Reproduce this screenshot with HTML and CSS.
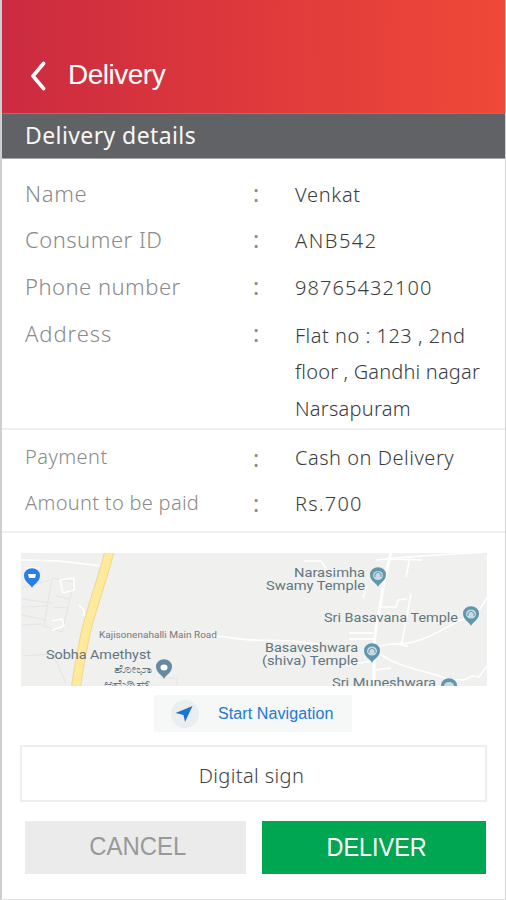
FILE: index.html
```html
<!DOCTYPE html>
<html lang="en">
<head>
<meta charset="utf-8">
<title>Delivery</title>
<link rel="stylesheet" href="styles.css">
</head>
<body>
<div class="screen">
  <header class="topbar">
    <svg class="back" width="18" height="30" viewBox="0 0 18 30"><path d="M15.500 2.500 5 15l10.500 12.500" fill="none" stroke="#fff" stroke-width="3.600" stroke-linecap="round" stroke-linejoin="round"/></svg>
    <h1 class="title">Delivery</h1>
  </header>
  <h2 class="subhead">Delivery details</h2>

  <dl class="details">
    <div class="row"><dt class="t-name">Name</dt><span class="colon">:</span><dd class="t-venkat">Venkat</dd></div>
    <div class="row consumer"><dt class="t-consumer">Consumer ID</dt><span class="colon">:</span><dd class="t-id">ANB542</dd></div>
    <div class="row"><dt class="t-phone">Phone number</dt><span class="colon">:</span><dd class="t-number">98765432100</dd></div>
    <div class="row address"><dt class="t-address">Address</dt><span class="colon">:</span><dd><span class="t-a1">Flat no : 123 , 2nd</span><br><span class="t-a2">floor , Gandhi nagar</span><br><span class="t-a3">Narsapuram</span></dd></div>
  </dl>
  <dl class="details payment">
    <div class="row"><dt class="t-pay">Payment</dt><span class="colon">:</span><dd class="t-cash">Cash on Delivery</dd></div>
    <div class="row amount"><dt class="t-amount">Amount to be paid</dt><span class="colon">:</span><dd class="t-rs">Rs.700</dd></div>
  </dl>

  <main class="actions">
    <svg class="map" width="466" height="133" viewBox="21 553 466 133">
      <defs>
        <path id="pin" d="M0 11C-1.500 7-8 5-8-1.500A8 7.300 0 0 1 8-1.500C8 5 1.500 7 0 11Z"/>
        <path id="highway" d="M109.500 551C104 575 90 612 85 636S78 670 76 688"/>
      </defs>
      <rect x="21" y="553" width="466" height="133" fill="#f0f0ee"/>
      <g fill="none" stroke="#e3e6e8" stroke-width="1">
        <path d="M22 588l28-8M22 599l30 4M22 607l25-1M22 615l24 5M22 625l20-1M52 578l-8 48 18 6 12-50zM56 596l13 3M53 607l14 1M22 656l31-2 13 29M160 678h17v8"/>
      </g>
      <g fill="none" stroke="#fff" stroke-width="1.600" stroke-linejoin="round">
        <path d="M21 560l38 1 44 5M25 568h16M60 580l14-2v12l-11 3zM52 621l10-2 2 7-12 4M79 605l5 5 0 6 5-2"/>
        <path d="M205 637c18-3 30 3 48 3s55 1 76 7"/>
        <path d="M304 561h17l8 11 11 1M367 586l-4 12"/>
        <path d="M391 553c-5 20-8 31-10 48-2 15-6 24-7 47v38" stroke-width="3"/>
        <path d="M376 560l30-3 80-5M386 559l36 1M410 557l-4 20M379 607h17l2-7 9-1M411 594l-9 48-5 3M349 639h26M349 633h24M375 647l16-3c35 2 55-20 80-28 9-5 13-12 16-19M400 645l8 1M380 654c19 14 49 17 67 25l17 1 8-4 7 1 8-11M346 665l28-4M375 670l16-2"/>
      </g>
      <use href="#highway" stroke="#eed88e" stroke-width="10" fill="none"/>
      <use href="#highway" stroke="#ffe99b" stroke-width="8" fill="none"/>
      <use href="#pin" x="32" y="577" fill="#287de9"/>
      <path d="M28 574h8l-1 4h-6z" fill="#fff"/>
      <g fill="#6296ad">
        <use href="#pin" x="378" y="576"/><use href="#pin" x="471" y="615"/><use href="#pin" x="372" y="652"/><use href="#pin" x="449" y="687"/>
      </g>
      <g fill="#c7dbe4"><ellipse cx="378" cy="575.500" rx="5" ry="4.500"/><ellipse cx="471" cy="614" rx="5" ry="4.500"/><ellipse cx="372" cy="651" rx="5" ry="4.500"/><ellipse cx="449" cy="686" rx="5" ry="4"/></g>
      <g fill="none" stroke="#6296ad" stroke-width="1"><path d="M375 577v-3l3-2 3 2v3M468 616v-3l3-2 3 2v3M369 653v-3l3-2 3 2v3"/></g>
      <use href="#pin" x="164" y="668" fill="#658aa0"/><ellipse cx="164" cy="667.500" rx="3.500" ry="3" fill="#fff"/>
      <g class="maptext">
        <text x="294" y="577" textLength="71" lengthAdjust="spacingAndGlyphs">Narasimha</text>
        <text x="266" y="590" textLength="99" lengthAdjust="spacingAndGlyphs">Swamy Temple</text>
        <text x="324" y="621.500" textLength="134" lengthAdjust="spacingAndGlyphs">Sri Basavana Temple</text>
        <text x="265" y="652" textLength="93" lengthAdjust="spacingAndGlyphs">Basaveshwara</text>
        <text x="262" y="665" textLength="96" lengthAdjust="spacingAndGlyphs">(shiva) Temple</text>
        <text x="332" y="686.500" textLength="104" lengthAdjust="spacingAndGlyphs">Sri Muneshwara</text>
        <text x="46" y="659" textLength="105" lengthAdjust="spacingAndGlyphs">Sobha Amethyst</text>
        <text class="small" x="114" y="673" textLength="38" lengthAdjust="spacingAndGlyphs">ಶೋಭಾ</text>
        <text class="small" x="104" y="688" textLength="46" lengthAdjust="spacingAndGlyphs">ಅಮೆಥಿಸ್ಟ್</text>
        <text class="roadname" x="99" y="638" textLength="118" lengthAdjust="spacingAndGlyphs">Kajisonenahalli Main Road</text>
      </g>
    </svg>
    <button class="navigate">
      <svg width="28" height="28" viewBox="0 0 28 28"><circle cx="14" cy="14" r="14" fill="#ebeeee"/><path d="M21.500 6 4.500 13l8 2L14 22z" fill="#1c76cf"/></svg>
      <span>Start Navigation</span>
    </button>
    <div class="sign">Digital sign</div>
    <div class="buttons">
      <button class="btn cancel"><span class="label">CANCEL</span></button>
      <button class="btn deliver"><span class="label">DELIVER</span></button>
    </div>
  </main>
</div>
</body>
</html>
```
FILE: styles.css
```css
* { box-sizing: border-box; }
body { margin: 0; background: #fff; font-family: "Noto Sans", sans-serif; font-weight: 300; }
h1, h2, dl, dd { margin: 0; font-weight: inherit; }
button { border: 0; padding: 0; font: inherit; }
.screen { width: 506px; height: 900px; overflow: hidden; border-left: 2px solid #cfcfd1; border-right: 1px solid #d3d3d5; border-bottom: 1px solid #e4e4e4; }
.topbar { height: 113px; margin-right: -1px; padding: 38px 0 0 26px; display: flex; align-items: center; gap: 22px; background: linear-gradient(91deg, #cb2b40, #df393c 50%, #ef4938); color: #fff; }
.back { flex: none; }
.title { font: 400 28px/34px "Liberation Sans", sans-serif; letter-spacing: -0.5px; padding-bottom: 1px; }
.subhead { height: 46px; margin-left: -2px; margin-right: -1px; padding-left: 25px; background: #616266; border-top: 1px solid #858085; border-bottom: 1px solid #a5a5a8; color: #f7f7f7; font-size: 23px; line-height: 42px; font-weight: 400; letter-spacing: 0.4px; }
.details { height: 271px; padding: 12px 0 0 23px; border-bottom: 2px solid #efefef; }
.row { height: 46.600px; display: grid; grid-template-columns: 228px 42px 1fr; align-items: start; line-height: 46px; white-space: nowrap; }
dt { color: #8a8a8a; font-size: 22px; line-height: 44px; }
.consumer dt, .consumer .colon { line-height: 42px; }
.consumer dd { line-height: 44px; }
dd { color: #3a3c3e; font-size: 20px; padding-top: 1px; }
.colon { color: #8a8a8a; font-size: 23px; line-height: 44px; font-weight: 400; }
.address dd { line-height: 36.500px; padding-top: 7px; }
.payment { height: 103px; padding-top: 4px; }
.payment dt { font-size: 20px; line-height: 46px; }
.payment .colon { line-height: 48px; }
.amount dt, .amount dd, .payment .amount .colon { line-height: 44px; }
.t-name { letter-spacing: 0.7px; }
.t-consumer { letter-spacing: 0.5px; }
.t-phone { letter-spacing: 0.48px; }
.t-address { letter-spacing: 0.95px; }
.t-venkat { letter-spacing: 0.7px; }
.t-id { letter-spacing: 1.5px; }
.t-number { letter-spacing: 1.080px; }
.t-a1 { letter-spacing: 0.5px; }
.t-a2 { letter-spacing: 0.18px; }
.t-a3 { letter-spacing: 0.25px; }
.t-pay { letter-spacing: 0.45px; }
.t-cash { letter-spacing: 0.52px; }
.t-amount { letter-spacing: 0.3px; }
.t-rs { letter-spacing: 1.200px; }
.actions { padding: 20px 19px 0; display: flex; flex-direction: column; }
.map { display: block; flex: none; }
.maptext { font: 400 12px Roboto, sans-serif; fill: #60767f; }
.small { font-size: 11px; }
.roadname { font-size: 9px; fill: #777; }
.navigate { align-self: flex-start; width: 198px; height: 37px; margin: 9px 0 0 133px; padding-left: 17px; display: flex; align-items: center; gap: 19px; background: #f6f7f7; color: #2079d2; font: 400 16px "Liberation Sans", sans-serif; letter-spacing: 0.1px; }
.sign { width: 467px; height: 57px; margin-top: 13px; margin-left: -1px; border: 2px solid #eee; display: flex; align-items: center; justify-content: center; color: #3f4144; font-size: 20px; letter-spacing: 0.4px; padding: 3px 4px 0 0; }
.buttons { display: flex; gap: 16px; margin: 19px 0 0 4px; }
.btn { height: 53px; font: 400 26px "Liberation Sans", sans-serif; white-space: nowrap; }
.label { display: inline-block; transform: scaleX(0.92); }
.cancel { width: 221px; background: #ebebeb; color: #999; padding: 0 0 2px 5px; }
.deliver { width: 224px; background: #00a651; color: #fff; padding-left: 5px; }
.deliver .label { transform: scaleX(0.9); }
```
